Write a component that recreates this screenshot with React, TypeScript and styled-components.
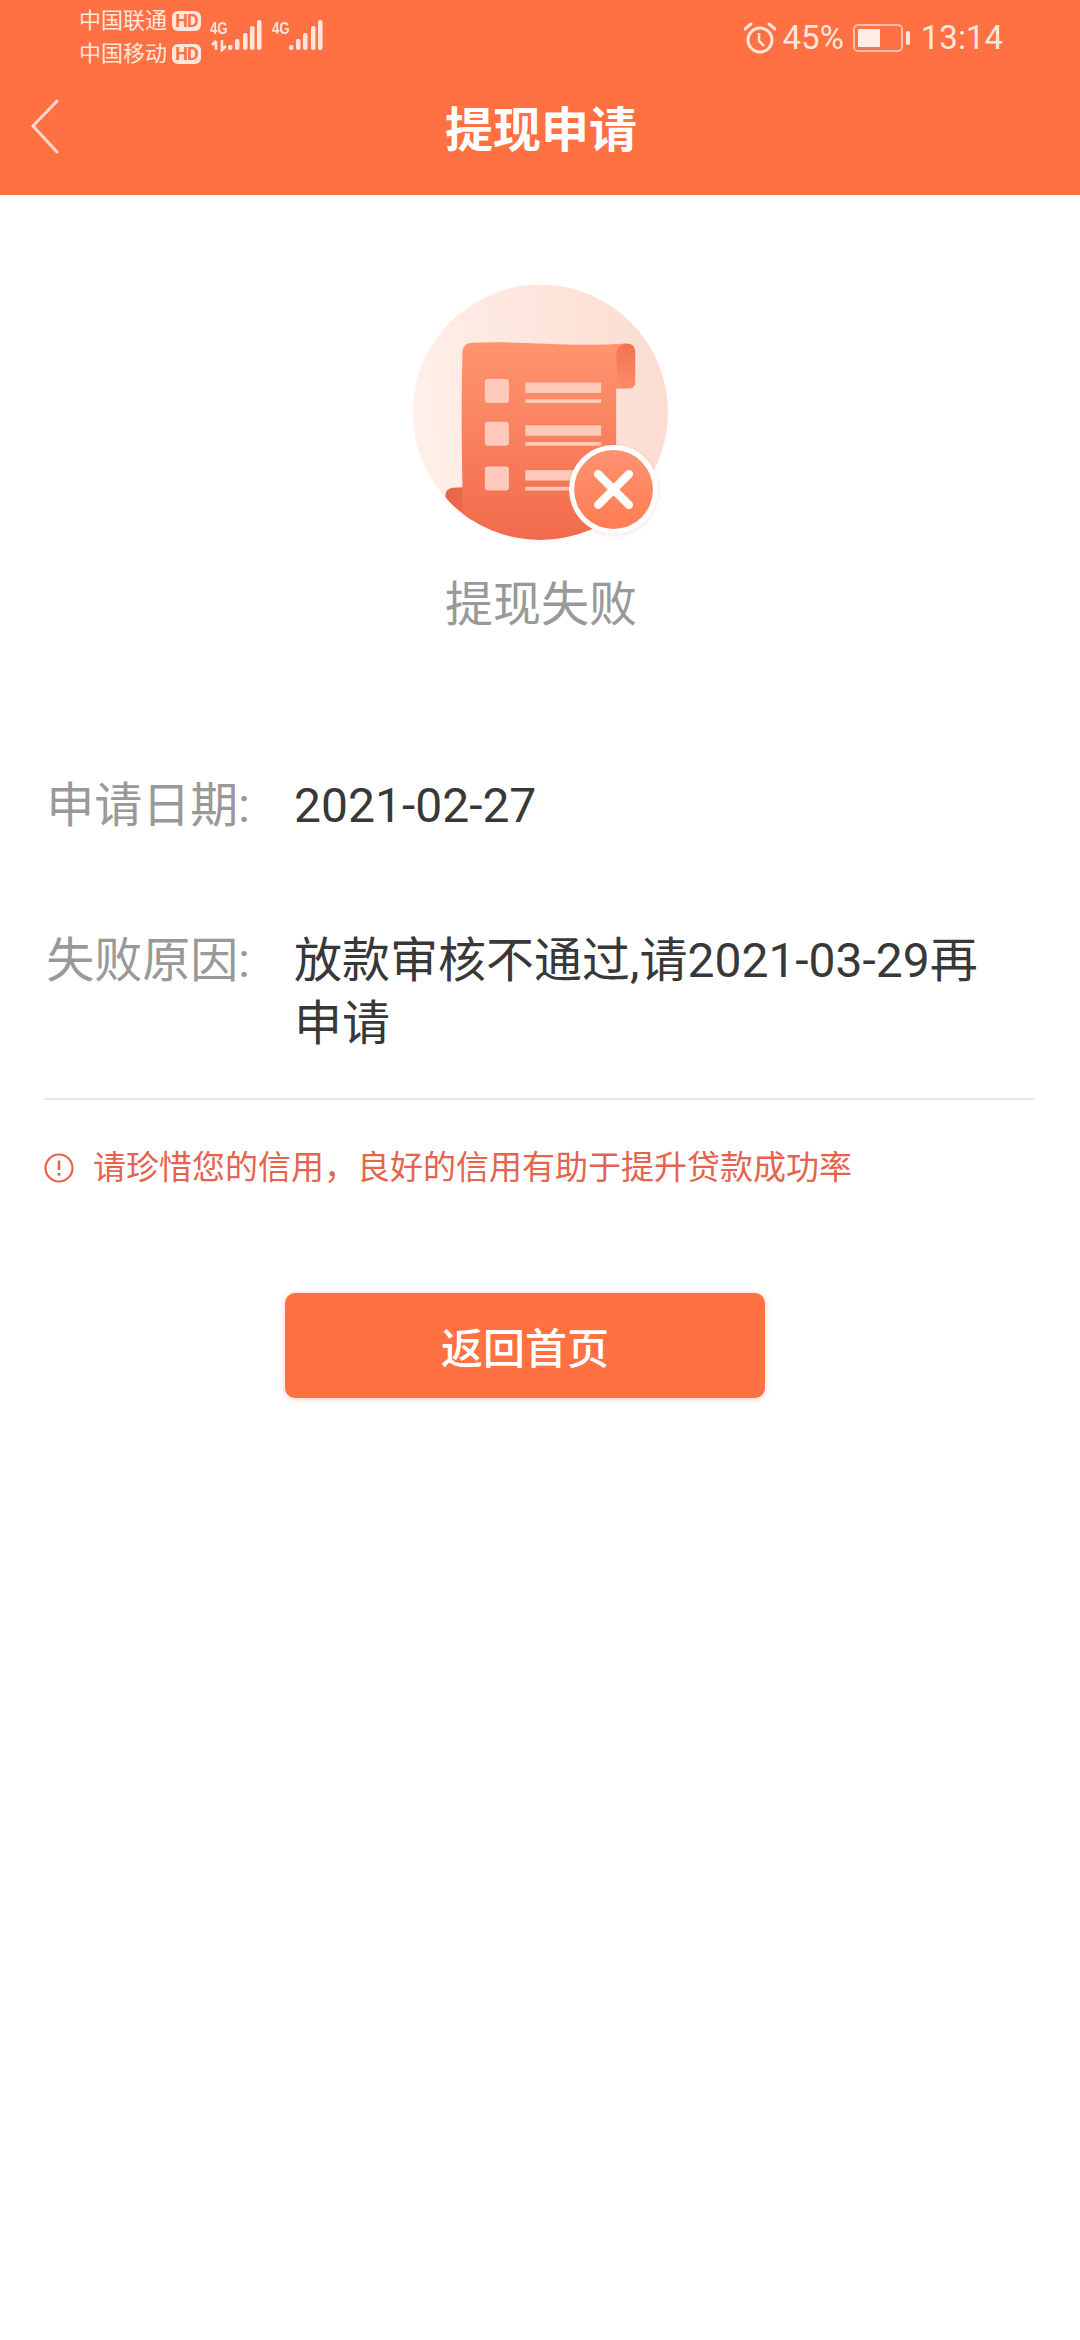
import React from "react";
import styled, { createGlobalStyle } from "styled-components";

const GlobalStyle = createGlobalStyle`
  html, body {
    margin: 0;
    padding: 0;
    background: #fff;
  }
  body {
    font-family: Roboto, "Noto Sans CJK SC", sans-serif;
  }
`;

const Page = styled.div`
  width: 1080px;
  min-height: 2340px;
  background: #fff;
  display: flex;
  flex-direction: column;
`;

const Header = styled.header`
  height: 195px;
  background: #ff7043;
  color: #fff;
  display: flex;
  flex-direction: column;
`;

const StatusBar = styled.div`
  height: 66px;
  padding: 0 77px 0 79px;
  display: flex;
  justify-content: space-between;
  align-items: flex-start;
  color: #ffe6dd;
`;

const StatusLeft = styled.div`
  display: flex;
  align-items: flex-start;
`;

const Carriers = styled.div`
  padding-top: 4px;
  display: flex;
  flex-direction: column;
`;

const Carrier = styled.div`
  height: 33px;
  display: flex;
  align-items: center;
  gap: 5px;
  font-size: 22px;
  line-height: 33px;
`;

const HdBadge = styled.span`
  width: 29px;
  height: 20px;
  border-radius: 6px;
  background: #ffe6dd;
  color: #ff7043;
  font-size: 18px;
  line-height: 20px;
  font-weight: 700;
  text-align: center;
  letter-spacing: -1px;
`;

const Signal = styled.div`
  position: relative;
  margin-left: ${({ $gap }: { $gap: number }) => $gap}px;
  margin-top: 20px;
`;

const NetLabel = styled.span`
  position: absolute;
  left: 0;
  top: 0;
  font-family: "Liberation Sans", sans-serif;
  font-size: 17px;
  line-height: 17px;
  font-weight: 700;
  transform: scaleX(0.78);
  transform-origin: left center;
`;

const StatusRight = styled.div`
  padding-top: 20px;
  display: flex;
  align-items: center;
  font-size: 33px;
  line-height: 36px;
`;

const Percent = styled.span`
  margin: 0 9px 0 7px;
`;

const Clock = styled.span`
  margin-left: 10px;
`;

const NavBar = styled.div`
  position: relative;
  flex: 1;
  display: flex;
  align-items: center;
  justify-content: center;
`;

const BackIcon = styled.svg`
  position: absolute;
  left: 30px;
  top: 33px;
`;

const NavTitle = styled.h1`
  margin: 0;
  padding-left: 2px;
  font-size: 48px;
  line-height: 60px;
  font-weight: 700;
  color: #fff;
`;

const Result = styled.section`
  padding-top: 90px;
  display: flex;
  flex-direction: column;
  align-items: center;
`;

const ResultCaption = styled.div`
  margin-top: 35px;
  padding-left: 2px;
  font-size: 48px;
  line-height: 60px;
  color: #999;
`;

const Details = styled.section`
  margin-top: 139px;
  display: flex;
  flex-direction: column;
  gap: 92px;
`;

const Row = styled.div`
  display: grid;
  grid-template-columns: 250px 1fr;
  column-gap: 44px;
  padding-right: 70px;
  font-size: 48px;
  line-height: 63px;
`;

const RowLabel = styled.div`
  text-align: right;
  color: #999;
`;

const RowValue = styled.div`
  color: #383838;
`;

const Divider = styled.hr`
  margin: 43px 45px 0 44px;
  border: 0;
  border-top: 2px solid #e8e8e8;
`;

const Tip = styled.div`
  margin: 46px 0 0 44px;
  display: flex;
  align-items: center;
  gap: 19px;
  font-size: 33px;
  line-height: 44px;
  color: #e4644d;
`;

const HomeButton = styled.button`
  margin: 103px 0 0 285px;
  width: 480px;
  height: 105px;
  border: 0;
  border-radius: 10px;
  background: #ff7043;
  color: #fff;
  font-family: inherit;
  font-size: 42px;
  font-weight: 500;
  box-shadow: 0 1px 6px rgba(255, 112, 67, 0.35);
`;

const FULL_COMMA = "\uFF0C";

const SignalBars = ({ bars }: { bars: [number, number][] }) => (
  <>
    {bars.map(([x, h]) => (
      <rect key={x} x={x} y={30 - h} width="4.5" height={h} rx="2" fill="#ffe6dd" />
    ))}
  </>
);

const PaperIllustration = () => (
  <svg width="255" height="255" viewBox="97 75 763 763">
    <defs>
      <linearGradient id="disc" x1="0" y1="0.5" x2="1" y2="0.4">
        <stop offset="0" stopColor="#fff0e9" />
        <stop offset="1" stopColor="#fbdcd1" />
      </linearGradient>
      <linearGradient id="sheet" x1="0" y1="0" x2="0" y2="1">
        <stop offset="0" stopColor="#ff9570" />
        <stop offset="1" stopColor="#f1694a" />
      </linearGradient>
      <linearGradient id="curl" x1="0" y1="0" x2="0" y2="1">
        <stop offset="0" stopColor="#f37350" />
        <stop offset="1" stopColor="#fb8c66" />
      </linearGradient>
      <linearGradient id="mark" x1="0" y1="0" x2="0" y2="1">
        <stop offset="0" stopColor="#ff9272" />
        <stop offset="1" stopColor="#ff7d52" />
      </linearGradient>
      <clipPath id="round">
        <circle cx="478" cy="456" r="382" />
      </clipPath>
      <filter id="soft" x="-20%" y="-20%" width="140%" height="140%">
        <feDropShadow dx="0" dy="3" stdDeviation="6" floodColor="#e8775a" floodOpacity="0.25" />
      </filter>
    </defs>
    <circle cx="478" cy="456" r="382" fill="url(#disc)" />
    <g clipPath="url(#round)">
      <path d="M245 680 L215 682 Q192 686 194 708 L240 860 L300 860 Z" fill="#e9684a" />
      <path
        d="M245 275 Q247 250 272 248 C400 240 560 262 735 250 L735 385 L705 385 L705 700 L720 860 L245 860 L245 680 Q240 470 245 275 Z"
        fill="url(#sheet)"
      />
      <path
        d="M705 282 Q708 254 735 250 Q762 250 762 275 L762 365 Q762 385 742 385 L722 385 Q705 350 705 282 Z"
        fill="url(#curl)"
      />
      {[356, 484, 618].map((y) => (
        <g key={y} fill="#ffcabb">
          <rect x="312" y={y} width="72" height="72" rx="9" />
          <rect x="433" y={y + 11} width="227" height="31" />
          <rect x="433" y={y + 61} width="227" height="11" />
        </g>
      ))}
    </g>
    <circle cx="697" cy="687" r="133" fill="#fff" filter="url(#soft)" />
    <circle cx="697" cy="687" r="118" fill="url(#mark)" />
    <path d="M651 641 L743 733 M743 641 L651 733" stroke="#fff" strokeWidth="25" strokeLinecap="round" />
  </svg>
);

const App: React.FC = () => {
  return (
    <Page>
      <GlobalStyle />
      <Header>
        <StatusBar>
          <StatusLeft>
            <Carriers>
              <Carrier>
                中国联通<HdBadge>HD</HdBadge>
              </Carrier>
              <Carrier>
                中国移动<HdBadge>HD</HdBadge>
              </Carrier>
            </Carriers>
            <Signal $gap={9}>
              <NetLabel>4G</NetLabel>
              <svg width="52" height="32" viewBox="0 0 52 32">
                <path
                  d="M6 21 L6 30 M2 25 L6 21 M12 20 L12 30 L16 26"
                  stroke="#ffe6dd"
                  strokeWidth="2.6"
                  fill="none"
                />
                <SignalBars
                  bars={[
                    [18, 5],
                    [25, 11],
                    [33, 17],
                    [40, 24],
                    [47, 30],
                  ]}
                />
              </svg>
            </Signal>
            <Signal $gap={10}>
              <NetLabel>4G</NetLabel>
              <svg width="52" height="32" viewBox="0 0 52 32">
                <SignalBars
                  bars={[
                    [17, 5],
                    [24, 11],
                    [31, 17],
                    [39, 24],
                    [46, 30],
                  ]}
                />
              </svg>
            </Signal>
          </StatusLeft>
          <StatusRight>
            <svg width="32" height="32" viewBox="0 0 32 32" fill="none" stroke="#ffe6dd" strokeWidth="3">
              <circle cx="16" cy="18" r="12" />
              <path d="M15 11 V19 L20 24" strokeWidth="2.5" />
              <path d="M1 7 L7 2 M25 2 L31 7" strokeLinecap="round" />
            </svg>
            <Percent>45%</Percent>
            <svg width="58" height="28" viewBox="0 0 58 28">
              <rect x="1" y="1" width="48" height="26" rx="4" fill="none" stroke="#ffd8ca" strokeWidth="1.5" />
              <rect x="5" y="5" width="22" height="18" rx="1" fill="#ffeee8" />
              <rect x="53" y="7" width="4" height="14" rx="2" fill="#ffe6dd" />
            </svg>
            <Clock>13:14</Clock>
          </StatusRight>
        </StatusBar>
        <NavBar>
          <BackIcon width="30" height="56" viewBox="0 0 30 56" fill="none">
            <path d="M27 2 L3 27 L27 53" stroke="#ffd9cc" strokeWidth="3" strokeLinecap="round" />
          </BackIcon>
          <NavTitle>提现申请</NavTitle>
        </NavBar>
      </Header>

      <Result>
        <PaperIllustration />
        <ResultCaption>提现失败</ResultCaption>
      </Result>

      <Details>
        <Row>
          <RowLabel>申请日期:</RowLabel>
          <RowValue>2021-02-27</RowValue>
        </Row>
        <Row>
          <RowLabel>失败原因:</RowLabel>
          <RowValue>放款审核不通过,请2021-03-29再申请</RowValue>
        </Row>
      </Details>

      <Divider />

      <Tip>
        <svg width="30" height="30" viewBox="0 0 30 30" fill="none" stroke="#e4644d">
          <circle cx="15" cy="15" r="13.5" strokeWidth="2.2" />
          <path d="M15 7.5 V17" strokeWidth="2.6" />
          <path d="M15 20 V22.6" strokeWidth="2.8" />
        </svg>
        <span>
          请珍惜您的信用{FULL_COMMA}良好的信用有助于提升贷款成功率
        </span>
      </Tip>

      <HomeButton type="button">返回首页</HomeButton>
    </Page>
  );
};

export default App;
